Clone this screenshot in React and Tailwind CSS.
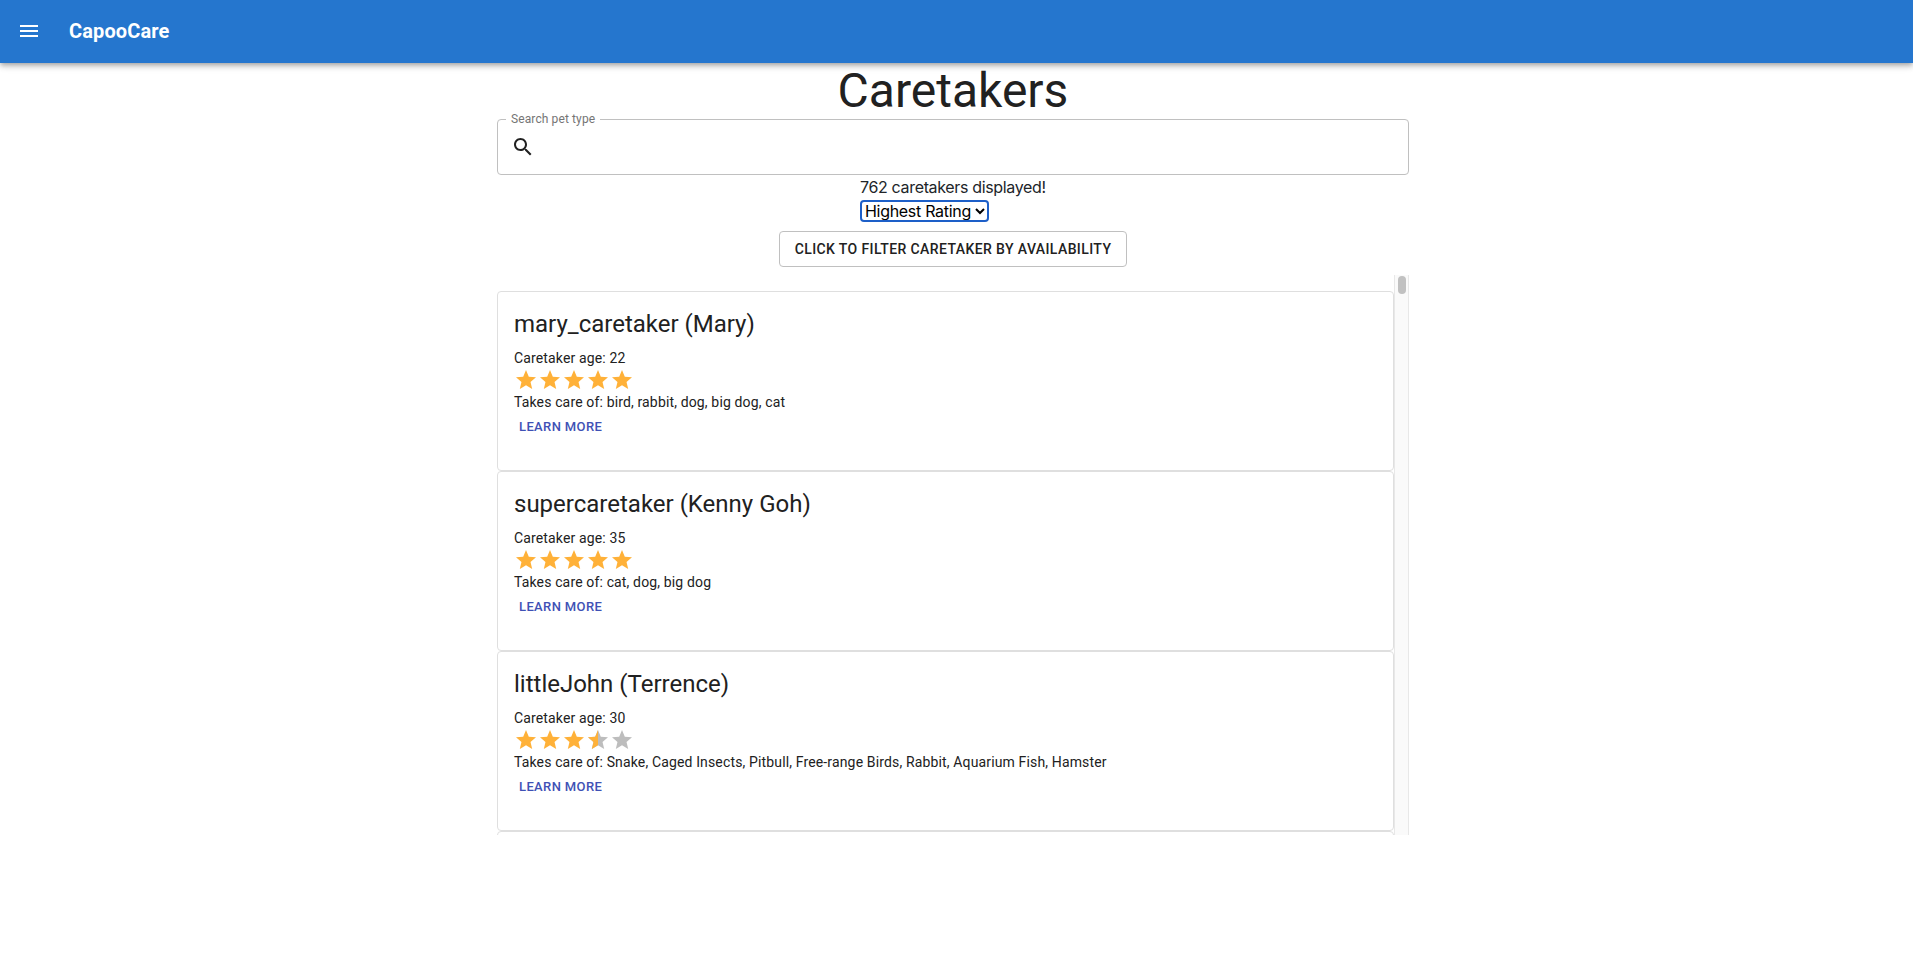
const caretakers = [
  { name: "mary_caretaker (Mary)", age: 22, rating: 5, pets: "bird, rabbit, dog, big dog, cat" },
  { name: "supercaretaker (Kenny Goh)", age: 35, rating: 5, pets: "cat, dog, big dog" },
  {
    name: "littleJohn (Terrence)",
    age: 30,
    rating: 3.5,
    pets: "Snake, Caged Insects, Pitbull, Free-range Birds, Rabbit, Aquarium Fish, Hamster",
  },
];

const STAR = "M12 17.27L18.18 21l-1.64-7.03L22 9.24l-7.19-.61L12 2 9.19 8.63 2 9.24l5.46 4.73L5.82 21z";

function Star({ fill }) {
  return (
    <svg viewBox="0 0 24 24" className="size-6">
      {fill < 1 && <path d={STAR} fill="#bdbdbd" />}
      {fill > 0 && (
        <svg width={24 * fill} height="24" viewBox={`0 0 ${24 * fill} 24`}>
          <path d={STAR} fill="#ffb138" />
        </svg>
      )}
    </svg>
  );
}

function CaretakerCard({ name, age, rating, pets }) {
  return (
    <article className="h-[180px] shrink-0 rounded-[4px] border border-[#dfdfdf] bg-white p-4">
      <h2 className="mb-2 text-2xl/8 font-normal">{name}</h2>
      <p className="text-sm/5 tracking-[0.145px]">Caretaker age: {age}</p>
      <div className="flex h-6">
        {[0, 1, 2, 3, 4].map((i) => (
          <Star key={i} fill={Math.max(0, Math.min(1, rating - i))} />
        ))}
      </div>
      <p className="text-sm/5 tracking-[0.145px]">Takes care of: {pets}</p>
      <button className="block px-[5px] py-1 text-[13px]/[22px] font-medium tracking-[0.37px] text-[#3f51b5] uppercase">
        Learn more
      </button>
    </article>
  );
}

export default function App() {
  return (
    <div className="min-h-[964px] bg-white font-[Roboto,sans-serif] text-[#212121]">
      <header className="relative flex h-[63px] items-center bg-[#2576ce] pb-px pl-[17px] text-white shadow-[0_2px_4px_-1px_rgba(0,0,0,0.2),0_4px_5px_0_rgba(0,0,0,0.14),0_1px_10px_0_rgba(0,0,0,0.12)]">
        <svg viewBox="0 0 24 24" fill="currentColor" className="size-6">
          <path d="M3 18h18v-2H3v2zm0-5h18v-2H3v2zm0-7v2h18V6H3z" />
        </svg>
        <span className="ml-7 text-xl font-bold tracking-[0.12px]">CapooCare</span>
      </header>

      <div className="pr-[7px]">
        <main className="mx-auto flex w-[912px] flex-col items-center">
          <h1 className="text-5xl/[56px] font-normal">Caretakers</h1>

          <fieldset className="-mt-[7px] h-[63px] w-full rounded-[4px] border border-[#c0c0c0] pl-2">
            <legend className="h-[14px] px-[5px] text-xs/[14px] tracking-[0.11px] text-[#757575]">Search pet type</legend>
            <label className="flex h-[42px] items-center pl-[5px]">
              <svg viewBox="0 0 24 24" fill="currentColor" className="size-6">
                <path d="M15.5 14h-.79l-.28-.27C15.41 12.59 16 11.11 16 9.5 16 5.91 13.09 3 9.5 3S3 5.91 3 9.5 5.91 16 9.5 16c1.61 0 3.09-.59 4.23-1.57l.27.28v.79l5 4.99L20.49 19l-4.99-5zm-6 0C7.01 14 5 11.99 5 9.5S7.01 5 9.5 5 14 7.01 14 9.5 11.99 14 9.5 14z" />
              </svg>
              <input aria-label="Search pet type" className="ml-2 h-full w-[840px] outline-none" />
            </label>
          </fieldset>

          <div className="flex w-[186px] flex-col items-start font-[Inter,sans-serif] text-base/6 text-[#212529]">
            <p className="whitespace-nowrap tracking-[-0.34px]">762 caretakers displayed!</p>
            <div className="relative mt-px h-[22px] w-[129px]">
              <select className="block h-[22px] w-[129px] appearance-none rounded-[4px] border-2 border-[#1d5fc8] bg-white pl-[3px] text-base/[18px] tracking-[-0.3px] text-black outline-none">
                <option>Highest Rating</option>
              </select>
              <svg viewBox="0 0 10 7" fill="none" stroke="#000" strokeWidth="2" className="pointer-events-none absolute top-2 right-1 h-[7px] w-[10px]">
                <path d="M1 1l4 4 4-4" />
              </svg>
            </div>
          </div>

          <button className="mt-[9px] h-9 w-[348px] rounded-[4px] border border-[#c0c0c0] text-sm font-medium tracking-[0.4px] whitespace-nowrap uppercase">
            Click to filter caretaker by availability
          </button>

          <section className="mt-2 flex h-[560px] w-full overflow-hidden">
            <div className="flex h-full w-[897px] flex-col overflow-hidden pt-4">
              {caretakers.map((c) => (
                <CaretakerCard key={c.name} {...c} />
              ))}
              <div className="h-[180px] shrink-0 rounded-[4px] border border-[#dfdfdf]" />
            </div>
            <div className="flex w-[15px] justify-center border-x border-[#e8e8e8] bg-[#fafafa] pt-px">
              <div className="h-[18px] w-2 rounded-full bg-[#c1c1c1]" />
            </div>
          </section>
        </main>
      </div>
    </div>
  );
}
